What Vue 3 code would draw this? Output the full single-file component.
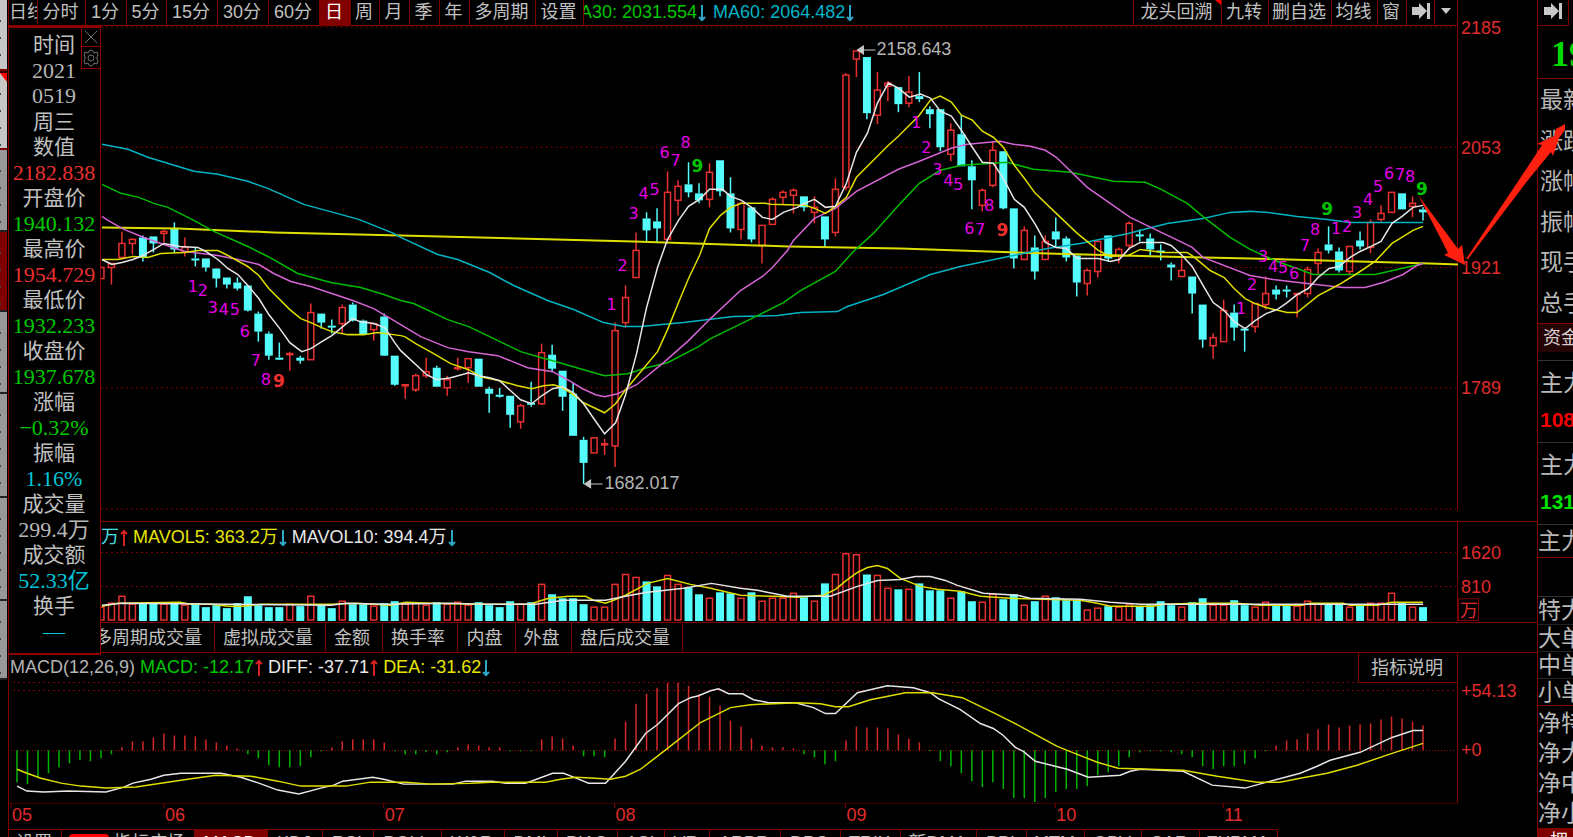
<script setup>
const STEP = 10.5
const xAt = (i) => 16 + STEP * i

const periods = [
  { t: '日线', w: 29, clip: true }, { t: '分时', w: 48 }, { t: '1分', w: 41 }, { t: '5分', w: 40 },
  { t: '15分', w: 51 }, { t: '30分', w: 51 }, { t: '60分', w: 51 }, { t: '日', w: 31, on: true },
  { t: '周', w: 29 }, { t: '月', w: 30 }, { t: '季', w: 30 }, { t: '年', w: 30 },
  { t: '多周期', w: 66 }, { t: '设置', w: 48 }
]
const tools = [
  { t: '龙头回溯', w: 88, flag: true }, { t: '九转', w: 47 }, { t: '删自选', w: 63 },
  { t: '均线', w: 46 }, { t: '窗', w: 29 }
]
const info = [
  ['时间', 'n'], ['2021', 'g'], ['0519', 'g'], ['周三', 'n'],
  ['数值', 'n'], ['2182.838', 'up'], ['开盘价', 'n'], ['1940.132', 'down'],
  ['最高价', 'n'], ['1954.729', 'up'], ['最低价', 'n'], ['1932.233', 'down'],
  ['收盘价', 'n'], ['1937.678', 'down'], ['涨幅', 'n'], ['−0.32%', 'down'],
  ['振幅', 'n'], ['1.16%', 'cy'], ['成交量', 'n'], ['299.4万', 'g'],
  ['成交额', 'n'], ['52.33亿', 'cy'], ['换手', 'n'], ['—', 'cy']
]
const volTabs = [
  { t: '多周期成交量', w: 206, end: true }, { t: '虚拟成交量', w: 111 }, { t: '金额', w: 57 },
  { t: '换手率', w: 75 }, { t: '内盘', w: 58 }, { t: '外盘', w: 56 }, { t: '盘后成交量', w: 111 }
]
const indicators = [
  ['设置', 53], ['指标广场', 133, 'NEW'], ['MACD', 73], ['KDJ', 55], ['RSI', 51], ['BOLL', 68], ['W&R', 63],
  ['DMI', 53], ['BIAS', 60], ['ASI', 47], ['VR', 45], ['ARBR', 71], ['DPO', 60], ['TRIX', 60],
  ['新DMA', 76], ['BBI', 50], ['MTM', 58], ['OBV', 57], ['SAR', 58], ['EXPMA', 78]
]

// [kind, high, body top, body bottom, low] starting at bar 8
const raw = `r 267 267 278 278|r 263 263 267 284|r 231 243 257 257|r 238 239 243 254|c 235 237 256 261|c 236 236 242 252
r 229 231 233 242|c 222 228 248 252|r 237 247 251 256|c 247 258 259 266|c 258 258 266 271|c 268 268 277 287|c 277 277 283 288
c 277 282 287 290|c 285 285 309 311|c 311 313 330 341|c 331 333 354 359|c 342 357 358 359|r 351 353 354 370|c 355 357 359 363
r 303 312 359 359|c 313 313 321 328|c 319 325 326 333|r 304 307 323 333|c 302 304 319 321|c 319 320 333 334|r 323 323 329 340
c 313 316 354 355|c 355 355 383 385|r 384 384 384 398|r 373 375 389 391|r 357 371 375 377|c 365 367 385 385|r 375 379 387 395
r 357 367 367 370|r 358 358 367 382|c 358 358 385 385|c 386 388 392 412|c 387 394 395 397|c 395 395 413 427|r 403 405 421 428
c 381 402 403 406|r 343 352 403 404|c 344 354 367 371|c 370 370 395 410|c 382 393 434 434|c 436 439 461 483|r 437 437 452 452
r 438 443 443 454|r 322 330 445 466|r 285 297 322 327|r 232 250 277 277|c 212 218 229 242|c 208 221 227 242|r 171 192 239 239
r 180 186 200 215|c 162 184 191 197|c 183 193 199 203|r 163 172 199 207|c 160 160 190 196|c 177 193 227 232|r 202 203 229 239
c 207 207 238 242|r 225 225 245 263|r 197 199 224 224|r 190 192 197 204|r 188 190 195 213|c 196 196 206 211|r 196 207 212 223
c 216 216 238 246|r 178 189 232 236|r 73 75 187 190|r 51 51 59 77|c 57 57 112 119|r 72 90 115 124|r 81 83 86 101
c 87 87 103 112|r 76 92 103 107|c 72 96 98 102|c 106 109 113 128|c 109 109 146 151|r 123 130 154 161|c 115 134 165 165
c 160 166 179 209|r 188 190 205 211|r 141 150 185 187|c 151 151 207 209|c 208 208 257 268|r 226 230 259 259|c 235 247 270 279
r 235 241 259 259|c 217 231 238 247|c 236 238 256 261|c 255 255 281 296|r 268 270 283 295|r 239 241 271 277|c 235 235 257 261
r 247 249 255 263|r 221 223 245 249|c 229 234 235 241|c 233 238 248 255|c 244 250 251 260|c 262 264 266 280|r 255 270 276 276
c 276 276 292 313|c 304 304 338 347|r 333 337 345 358|r 299 310 341 341|c 304 312 326 340|c 327 328 329 351|r 303 303 326 332
r 276 293 304 309|c 285 289 293 299|c 285 289 290 297|r 293 293 293 317|r 266 269 293 297|r 248 252 263 275|c 226 244 249 253
c 247 251 269 272|r 246 246 271 275|c 231 240 245 249|r 219 222 247 253|r 205 213 219 221|r 192 192 212 212|c 193 193 208 209
r 196 203 206 217|c 207 209 211 220`
const candles = raw.split(/[|\n]/).map((s, n) => {
  const [k, ...v] = s.trim().split(' ')
  const [h, t, b, l] = v.map(Number)
  return { k, h, t, b, l, x: xAt(n + 8) }
})

const volTops = [606, 602, 595, 603, 603, 603, 603, 603, 604, 603, 607, 605, 608, 603, 596, 605, 607, 607, 603, 606, 595, 605, 608, 600,
  604, 604, 605, 603, 601, 603, 602, 604, 602, 603, 601, 604, 602, 605, 607, 601, 603, 602, 583, 594, 598, 598, 604, 606, 606, 583,
  573, 576, 581, 586, 574, 583, 587, 594, 597, 592, 593, 597, 592, 600, 597, 597, 592, 597, 600, 583, 573, 552, 553, 574, 574, 587,
  589, 588, 583, 590, 590, 597, 591, 601, 601, 593, 599, 594, 604, 601, 595, 597, 600, 600, 609, 607, 606, 606, 603, 606, 605, 601,
  605, 606, 602, 598, 604, 604, 600, 605, 606, 601, 605, 605, 605, 600, 603, 603, 604, 606, 605, 602, 602, 592, 603, 606, 607]
const volumes = candles.map((c, n) => ({ k: c.k, x: c.x, t: volTops[n] }))

const hist = [782, 784, 777, 773, 767, 763, 760, 761, 758, 754, 747, 741, 741, 737, 733, 735, 735, 736, 739, 742, 745, 748, 754, 758,
  765, 767, 767, 766, 757, 751, 747, 741, 739, 739, 739, 742, 751, 754, 754, 752, 754, 752, 747, 744, 745, 747, 747, 751, 751, 751,
  739, 736, 738, 745, 756, 756, 757, 738, 721, 703, 693, 687, 682, 682, 685, 693, 696, 705, 720, 726, 738, 745, 747, 747, 748, 754,
  757, 764, 761, 740, 726, 727, 727, 728, 734, 738, 742, 751, 761, 766, 773, 781, 787, 782, 789, 798, 798, 802, 798, 792, 789, 789,
  786, 775, 772, 766, 757, 752, 751, 751, 752, 754, 757, 766, 769, 766, 766, 764, 758, 751, 745, 740, 739, 733, 729, 724, 727, 725,
  724, 723, 719, 716, 718, 721, 725]

const priceLines = [
  ['long', '101,227 177,228 273,232 400,235 633,241 788,246 900,248 1047,253 1160,256 1250,258 1430,263 1458,264'],
  ['ma60', '101,144 127,149 147,157 170,164 193,171 217,174 247,181 267,188 303,204 358,219 393,233 400,237 437,254 457,259 489,272 513,285 547,300 573,309 603,322 623,326 640,326 683,322 733,316 777,315 800,312 837,311 847,306 883,294 930,274 960,266 1013,255 1047,248 1080,243 1128,233 1167,223 1203,218 1230,212 1250,211 1268,212 1297,216 1327,219 1350,222 1423,222'],
  ['ma30', '101,184 120,193 138,197 153,203 167,207 193,220 213,231 247,246 267,256 297,273 330,282 360,287 383,294 400,300 413,303 447,319 468,326 489,336 520,351 541,357 552,360 590,371 604,375 627,373 646,367 667,362 698,346 710,338 743,322 783,302 800,290 835,271 853,251 873,233 900,203 919,183 940,170 961,165 1007,162 1033,169 1070,172 1113,181 1145,182 1161,189 1187,203 1205,218 1230,237 1250,249 1277,261 1297,268 1313,274 1375,274 1397,269 1423,263'],
  ['ma20', '101,216 107,220 123,229 143,237 163,244 184,251 217,255 237,259 258,264 273,273 290,281 310,286 331,293 352,300 373,308 400,324 420,336 447,347 468,351 497,355 527,367 552,371 567,379 582,388 595,394 604,396 617,393 636,384 663,362 688,340 710,318 740,290 762,276 772,267 787,250 793,240 814,218 835,208 856,191 898,169 919,161 951,148 967,144 1000,141 1013,144 1030,146 1045,150 1056,157 1087,187 1130,217 1161,232 1182,242 1192,247 1203,257 1250,275 1273,279 1307,283 1343,287 1365,287 1383,282 1403,274 1417,265 1423,263'],
  ['ma10', '101,259 117,259 132,256 147,257 160,253 184,252 197,250 217,250 227,255 247,266 258,275 268,288 289,309 300,318 310,322 321,327 331,331 347,334 363,334 377,332 400,335 404,336 415,343 433,353 450,363 468,369 480,376 499,380 517,385 531,388 543,385 553,384 562,387 573,394 583,402 604,412 615,403 625,389 636,376 646,364 657,351 667,329 678,302 688,278 699,255 709,228 720,215 730,207 741,203 765,203 770,204 805,205 814,208 825,213 835,206 846,197 856,177 888,145 898,136 919,115 930,100 940,96 951,102 961,115 972,120 982,131 993,137 1003,147 1014,165 1024,178 1035,193 1056,213 1077,233 1098,250 1110,256 1128,255 1140,249 1163,252 1187,252 1193,256 1210,270 1224,277 1234,288 1245,298 1255,303 1266,307 1287,312 1297,312 1318,295 1339,284 1357,273 1375,261 1392,243 1413,230 1423,226'],
  ['ma5', '101,259 111,264 121,262 132,259 142,255 153,249 163,243 179,246 197,247 205,251 217,259 227,268 237,274 247,285 258,298 268,314 279,328 289,342 301,351 310,348 321,341 331,335 342,326 352,318 359,321 373,323 384,327 394,342 400,350 426,374 436,379 450,377 468,372 478,375 489,377 499,380 510,390 520,399 531,403 541,395 552,388 562,386 573,392 583,403 594,419 604,433 615,422 625,394 636,353 646,307 657,267 663,250 667,239 678,220 688,206 699,199 709,189 722,189 730,196 741,200 751,207 762,217 772,219 783,212 797,207 804,203 814,199 825,207 835,206 846,183 856,152 867,133 877,103 888,83 898,88 909,97 920,94 930,98 940,111 951,116 961,130 972,147 982,162 993,163 1003,178 1014,199 1024,207 1035,224 1045,242 1056,247 1066,248 1077,258 1098,258 1110,261 1119,259 1129,248 1140,242 1163,242 1171,245 1182,255 1192,266 1203,285 1213,302 1224,310 1234,321 1245,328 1255,320 1266,313 1277,309 1287,302 1297,294 1308,288 1318,277 1329,268 1339,266 1350,257 1360,251 1371,246 1381,241 1392,223 1402,216 1413,207 1423,205']
]
const volLines = [
  ['ma10', '101,606 117,603 179,602 190,604 210,604 228,606 242,606 260,604 330,604 355,603 390,605 405,602 430,603 480,604 530,604 535,602 548,598 568,596 585,596 593,600 605,603 613,600 625,595 647,583 667,578 690,584 710,588 740,595 773,596 797,597 823,595 835,589 846,580 857,572 867,567 877,565 887,568 900,578 920,586 937,589 960,591 980,596 1010,598 1080,600 1097,603 1110,606 1153,606 1163,604 1198,603 1237,603 1260,605 1302,605 1310,603 1343,603 1350,605 1377,605 1392,602 1423,602'],
  ['ma5', '101,605 121,603 230,604 330,605 345,603 385,604 450,603 480,604 535,604 563,600 605,600 630,595 647,592 683,588 711,583 740,588 757,590 787,596 830,596 857,586 877,580 900,579 915,576 930,576 945,580 957,585 983,593 1017,595 1030,598 1080,599 1110,602 1140,604 1423,604']
]
const macdLines = [
  ['ma5', '16,786 26,791 43,792 67,791 105,792 123,787 132,783 150,779 163,775 180,773 220,773 240,777 258,783 277,790 298,794 320,788 333,785 342,781 372,777 383,779 403,784 452,784 465,781 492,781 505,783 525,783 552,773 563,773 573,777 588,783 605,783 625,761 645,733 657,724 678,703 690,697 698,695 710,690 718,688 728,693 742,693 753,699 768,702 795,702 813,707 825,713 835,713 857,692 887,685 913,687 930,692 938,698 960,709 980,723 993,728 1003,735 1015,747 1023,751 1035,761 1067,769 1088,777 1120,775 1130,771 1140,769 1183,771 1212,785 1245,788 1263,783 1300,773 1317,766 1330,760 1360,752 1392,737 1413,730 1423,730'],
  ['ma10', '16,769 26,773 40,778 60,783 80,786 105,788 135,787 180,780 215,775 250,776 277,781 300,786 345,786 370,782 405,782 430,784 470,783 490,782 545,782 560,779 575,777 595,778 610,779 625,776 640,769 667,748 700,722 730,707 750,704 797,702 820,703 835,706 848,706 870,699 905,692 932,692 962,697 993,712 1013,722 1033,733 1057,746 1077,754 1097,762 1118,768 1183,770 1217,776 1257,782 1280,782 1300,778 1327,773 1357,765 1392,753 1423,743']
]

const marks = [
  [1, 192, 285], [2, 202, 289], [3, 212, 306], [4, 223, 308], [5, 234, 308], [6, 244, 330], [7, 255, 359], [8, 265, 378], [9, 278, 380, 'hot'],
  [1, 611, 303], [2, 622, 265], [3, 633, 213], [4, 643, 193], [5, 654, 189], [6, 664, 152], [7, 675, 160], [8, 685, 142], [9, 697, 166, 'cool'],
  [1, 916, 122], [2, 926, 147], [3, 937, 169], [4, 948, 180], [5, 958, 184], [6, 969, 228], [7, 980, 229], [8, 989, 205], [9, 1002, 230, 'hot'],
  [1, 1241, 307], [2, 1252, 283], [3, 1263, 256], [4, 1273, 266], [5, 1283, 267], [6, 1294, 273], [7, 1305, 245], [8, 1315, 229], [9, 1327, 209, 'cool'],
  [1, 1336, 228], [2, 1347, 226], [3, 1357, 212], [4, 1368, 199], [5, 1378, 186], [6, 1389, 173], [7, 1400, 174], [8, 1410, 176], [9, 1422, 189, 'cool']
]
const months = [['05', 10], ['06', 163], ['07', 383], ['08', 614], ['09', 845], ['10', 1055], ['11', 1223]]
const quotes = ['最新', '涨跌', '涨幅', '振幅', '现手', '总手']
const orders = ['特大', '大单', '中单', '小单']
const nets = ['净特', '净大', '净中', '净小']
const strip = [
  ['light', 71], ['light flag', 79], ['grey', 82], ['red', 80], ['grey', 82], ['grey', 104], ['grey', 103], ['grey', 79]
]
</script>

<template>
  <div class="app">
    <aside class="strip">
      <div v-for="(s, n) in strip" :key="n" :class="s[0]" :style="{ height: s[1] + 'px' }"></div>
    </aside>

    <main class="main">
      <header class="toolbar">
        <nav class="cells">
          <button v-for="p in periods" :key="p.t" :class="{ on: p.on, clip: p.clip }" :style="{ width: p.w + 'px' }">{{ p.t }}</button>
        </nav>
        <div class="legend top">
          <span class="green">MA30: 2031.554</span>
          <svg class="arr" viewBox="0 0 10 18"><path class="dn" d="M5 1V16M2 13L5 16L8 13" /></svg>
          <span class="cyan">MA60: 2064.482</span>
          <svg class="arr" viewBox="0 0 10 18"><path class="dn" d="M5 1V16M2 13L5 16L8 13" /></svg>
        </div>
        <nav class="cells right">
          <button v-for="p in tools" :key="p.t" :class="{ flag: p.flag }" :style="{ width: p.w + 'px' }">{{ p.t }}</button>
          <button class="ico" aria-label="收起"><svg width="20" height="18" viewBox="0 0 20 18"><path d="M1 5H8V1L16 9L8 17V13H1ZM16 1H19V17H16Z" /></svg></button>
          <button class="ico more" aria-label="更多"><svg width="12" height="6" viewBox="0 0 12 6"><path d="M1 0H11L6 6Z" /></svg></button>
        </nav>
      </header>

      <section class="pane price">
        <svg class="plot" viewBox="8 26 1450 494" preserveAspectRatio="none">
          <line v-for="y in [27, 147, 267, 387, 508]" :key="y" class="dots" x1="10" x2="1456" :y1="y" :y2="y" />
          <line class="frame" x1="1457.5" x2="1457.5" y1="26" y2="509" />
          <g v-for="c in candles" :key="c.x" :class="c.k">
            <line v-if="c.h < c.t" :x1="c.x" :x2="c.x" :y1="c.h" :y2="c.t" />
            <line v-if="c.l > c.b" :x1="c.x" :x2="c.x" :y1="c.b" :y2="c.l" />
            <rect v-if="c.k === 'c'" :x="c.x - 4" :y="c.t" width="8" :height="c.b - c.t + 1" />
            <rect v-else :x="c.x - 3" :y="c.t" width="6" :height="Math.max(c.b - c.t, 1)" />
          </g>
          <polyline v-for="l in priceLines" :key="l[0]" :class="['ln', l[0]]" :points="l[1]" />
          <text v-for="(m, n) in marks" :key="n" :class="['mark', m[3]]" :x="m[1]" :y="m[2] + 6">{{ m[0] }}</text>
          <path class="tag" d="M857 50H875M863 46V54L857 50Z" />
          <text class="tagt" x="876" y="55">2158.643</text>
          <path class="tag" d="M584 483H602M590 479V487L584 483Z" />
          <text class="tagt" x="604" y="488">1682.017</text>
        </svg>
        <svg class="axis" viewBox="1458 26 79 494" preserveAspectRatio="none">
          <text x="1461" y="34">2185</text><text x="1461" y="154">2053</text>
          <text x="1461" y="274">1921</text><text x="1461" y="393">1789</text>
        </svg>
      </section>

      <section class="pane volume">
        <svg class="plot" viewBox="8 521 1450 101" preserveAspectRatio="none">
          <line v-for="y in [552, 586]" :key="y" class="dots" x1="10" x2="1456" :y1="y" :y2="y" />
          <line class="frame" x1="1457.5" x2="1457.5" y1="521" y2="622" />
          <g v-for="v in volumes" :key="v.x" :class="v.k">
            <rect v-if="v.k === 'c'" :x="v.x - 4" :y="v.t" width="8" :height="621 - v.t" />
            <rect v-else :x="v.x - 3" :y="v.t + 1" width="6" :height="619 - v.t" />
          </g>
          <polyline v-for="l in volLines" :key="l[0]" :class="['ln', l[0]]" :points="l[1]" />
        </svg>
        <svg class="axis" viewBox="1458 521 79 101" preserveAspectRatio="none">
          <text x="1461" y="558">1620</text><text x="1461" y="593">810</text>
          <rect class="box" x="1458.5" y="598.5" width="20" height="22" />
          <text x="1460" y="617">万</text>
        </svg>
        <div class="legend vol">
          <span class="aqua">万</span>
          <svg class="arr" viewBox="0 0 10 18"><path class="up" d="M5 17V2M2 5L5 2L8 5" /></svg>
          <span class="yellow">MAVOL5: 363.2万</span>
          <svg class="arr" viewBox="0 0 10 18"><path class="dn" d="M5 1V16M2 13L5 16L8 13" /></svg>
          <span class="white">MAVOL10: 394.4万</span>
          <svg class="arr" viewBox="0 0 10 18"><path class="dn" d="M5 1V16M2 13L5 16L8 13" /></svg>
        </div>
      </section>

      <nav class="cells voltabs">
        <button v-for="t in volTabs" :key="t.t" :class="{ end: t.end }" :style="{ width: t.w + 'px' }">{{ t.t }}</button>
      </nav>

      <section class="pane macd">
        <svg class="plot" viewBox="8 652 1450 151" preserveAspectRatio="none">
          <line v-for="y in [682, 690]" :key="y" class="dots" x1="12" x2="1456" :y1="y" :y2="y" />
          <line class="dots dense" x1="10" x2="1456" y1="750" y2="750" />
          <line class="frame" x1="1457.5" x2="1457.5" y1="652" y2="803" />
          <line v-for="(h, n) in hist" :key="n" :class="h > 750 ? 'neg' : 'pos'" :x1="xAt(n)" :x2="xAt(n)" y1="750" :y2="h" />
          <polyline v-for="l in macdLines" :key="l[0]" :class="['ln', l[0]]" :points="l[1]" />
        </svg>
        <svg class="axis" viewBox="1458 652 79 151" preserveAspectRatio="none">
          <text x="1461" y="696">+54.13</text><text x="1461" y="756">+0</text>
        </svg>
        <div class="legend mac">
          <span class="grey">MACD(12,26,9)</span>
          <span class="green lead">MACD: -12.17</span>
          <svg class="arr" viewBox="0 0 10 18"><path class="up" d="M5 17V2M2 5L5 2L8 5" /></svg>
          <span class="white">DIFF: -37.71</span>
          <svg class="arr" viewBox="0 0 10 18"><path class="up" d="M5 17V2M2 5L5 2L8 5" /></svg>
          <span class="yellow">DEA: -31.62</span>
          <svg class="arr" viewBox="0 0 10 18"><path class="dn" d="M5 1V16M2 13L5 16L8 13" /></svg>
        </div>
        <button class="explain">指标说明</button>
      </section>

      <div class="months">
        <svg class="plot" viewBox="8 803 1450 26" preserveAspectRatio="none">
          <line class="frame" x1="8" x2="1458" y1="803" y2="803" />
          <g v-for="m in months" :key="m[0]">
            <line class="frame" :x1="m[1]" :x2="m[1]" y1="803" y2="808" />
            <text class="month" :x="m[1] + 1" y="821">{{ m[0] }}</text>
          </g>
        </svg>
      </div>

      <nav class="cells indicators">
        <button v-for="t in indicators" :key="t[0]" :class="{ on: t[0] === 'MACD' }" :style="{ width: t[1] + 'px' }"><b v-if="t[2]">{{ t[2] }}</b>{{ t[0] }}</button>
      </nav>

      <section class="info">
        <div v-for="(r, n) in info" :key="n" :class="r[1]">{{ r[0] }}</div>
        <div class="corner">
          <button aria-label="关闭"><svg width="14" height="14" viewBox="0 0 14 14"><path d="M1 1L13 13M13 1L1 13" /></svg></button>
          <button aria-label="设置"><svg width="18" height="18" viewBox="0 0 18 18"><path d="M7 2L9 1L11 2L12 4L15 3L16 6L15 8V10L16 12L15 15L12 14L11 16L9 17L7 16L6 14L3 15L2 12L3 10V8L2 6L3 3L6 4Z" /><circle cx="9" cy="9" r="3" /></svg></button>
        </div>
      </section>
    </main>

    <aside class="side">
      <div class="sidebar-top"><button class="ico" aria-label="展开"><svg width="20" height="18" viewBox="0 0 20 18"><path d="M1 5H8V1L16 9L8 17V13H1ZM16 1H19V17H16Z" /></svg></button></div>
      <div class="last">1937.678</div>
      <div class="quotes"><div v-for="q in quotes" :key="q">{{ q }}</div></div>
      <div class="fund">资金</div>
      <div class="flow">
        <div>主力</div><div class="num hot">10850</div>
      </div>
      <div class="flow">
        <div>主力</div><div class="num cool">13120</div>
      </div>
      <div class="force">主力</div>
      <div class="blank"></div>
      <div class="orders"><div v-for="o in orders" :key="o">{{ o }}</div></div>
      <div class="nets"><div v-for="o in nets" :key="o">{{ o }}</div></div>
      <div class="foot">押</div>
    </aside>

    <svg class="draw" viewBox="1410 110 160 160">
      <path d="M1418 195L1442 241L1448 253L1444 255L1465 265L1462 245L1458 249L1450 238Z" />
      <path d="M1466 259L1519 180L1542 145L1537 144L1554 136L1556 129L1565 124V130L1559 138L1553 156L1551 152L1528 180L1468 259Z" />
    </svg>
  </div>
</template>

<style>
body { background: #000; }
</style>

<style scoped>
* { box-sizing: border-box; }
.app {
  position: relative; display: flex; height: 100vh; overflow: hidden; background: #000;
  font-family: "Liberation Sans", "Noto Sans CJK SC", sans-serif; font-size: 18px; color: #c0c0c0;
}
button { font: inherit; color: inherit; background: none; border: 0; padding: 0; margin: 0; white-space: nowrap; }

.strip { width: 8px; flex: none; }
.strip div { width: 7px; border-bottom: 2px solid #222; background: repeating-linear-gradient(180deg, transparent 0 15px, #444 15px 17px) 0 5px / 1px 100% no-repeat, #989898; }
.strip .light { background-color: #c6c6c6; border-bottom-color: #800000; }
.strip .red { background-color: #800000; }
.strip .flag { position: relative; border-top: 2px solid #300; }
.strip .flag::after { content: ""; position: absolute; inset: 0 0 auto 0; height: 9px; background: #f00; clip-path: polygon(0 0, 100% 0, 100% 100%); }

.main { position: relative; flex: 1; min-width: 0; display: flex; flex-direction: column; border-left: 1px solid #800000; }
.toolbar { display: flex; height: 26px; flex: none; border-bottom: 1px solid #800000; margin-right: 79px; }
.cells { display: flex; flex: none; }
.cells button { flex: none; height: 100%; border-right: 1px solid #780000; line-height: 22px; padding-bottom: 2px; padding-right: 2px; overflow: hidden; }
.cells .on { background: #800000; color: #fff; }
.cells .clip { text-align: left; }
.right { margin-left: auto; border-left: 1px solid #780000; }
.right .flag { position: relative; }
.right .flag::after { content: ""; position: absolute; top: 0; right: 0; width: 6px; height: 5px; background: #f00; clip-path: polygon(0 0, 100% 0, 100% 100%); }
.ico { display: flex; align-items: center; justify-content: center; }
.ico svg { fill: #c8c8c8; }
.cells .ico { width: 28px; padding-right: 0; padding-bottom: 3px; }
.cells .more { width: 23px; }

.legend { display: flex; align-items: center; white-space: pre; line-height: 24px; }
.legend .arr { width: 10px; height: 18px; flex: none; margin: 2px 4px 0 0; fill: none; stroke-width: 2; }
.dn { stroke: #2fa8c8; }
.up { stroke: #d42222; }
.top { flex: 1; min-width: 0; overflow: hidden; height: 23px; }
.top span:first-child { margin-left: -19px; }
.top .arr { margin-right: 6px; }
.green { color: #00c800; } .cyan { color: #00b4c8; } .aqua { color: #48e0e8; }
.yellow { color: #e6e600; } .white { color: #e8e8e8; } .legend .grey { color: #b4b4b4; }
.lead { margin-left: 5px; }

.pane { position: relative; display: flex; flex: none; }
.price { flex: 1; min-height: 0; }
.plot { display: block; flex: 1; min-width: 0; height: 100%; }
.axis { display: block; width: 79px; height: 100%; flex: none; overflow: visible; }
.axis text, .month { fill: #e02c2c; font-size: 18px; }
.axis .box { fill: none; stroke: #800000; }
.volume { height: 102px; border-top: 1px solid #800000; border-bottom: 1px solid #800000; }
.macd { height: 151px; border-top: 1px solid #800000; }
.vol { position: absolute; top: 3px; left: 92px; }
.mac { position: absolute; top: 2px; left: 1px; }
.voltabs { height: 29px; }
.voltabs button { line-height: 26px; padding-bottom: 0; padding-right: 4px; }
.voltabs .end { text-align: right; padding-right: 12px; }
.explain { position: absolute; top: 0; right: 79px; width: 100px; height: 30px; border: solid #800000; border-width: 0 1px 1px; background: #000; line-height: 26px; padding-right: 2px; }

.frame { stroke: #800000; stroke-width: 1; }
.dots { stroke: #800000; stroke-width: 1; stroke-dasharray: 2 3; shape-rendering: crispEdges; }
.dense { stroke-dasharray: 1 2; stroke: #a00000; }
.r { stroke: #e83030; stroke-width: 1.5; fill: none; }
.c line { stroke: #54fcfc; stroke-width: 1.5; }
.c rect { fill: #54fcfc; }
.ln { fill: none; stroke-width: 1.5; }
.long, .ma10 { stroke: #dede00; }
.long { stroke-width: 2; }
.ma60 { stroke: #00b4c4; } .ma30 { stroke: #00bc00; } .ma20 { stroke: #d464d4; } .ma5 { stroke: #e6e6e6; }
.pos { stroke: #d42828; stroke-width: 1.5; } .neg { stroke: #00b400; stroke-width: 1.5; }
.mark { fill: #e400e4; font: 16px "DejaVu Sans", sans-serif; text-anchor: middle; }
.mark.hot { fill: #f03030; font-size: 17px; font-weight: bold; }
.mark.cool { fill: #00c400; font-size: 17px; font-weight: bold; }
.tag { stroke: #c8c8c8; stroke-width: 1; fill: #c8c8c8; }
.tagt { fill: #b4b4b4; font-size: 18px; }

.months { display: flex; height: 26px; flex: none; margin-right: 79px; }
.indicators { height: 8px; overflow: hidden; border-top: 1px solid #780000; align-self: flex-start; }
.indicators button { height: 27px; line-height: 24px; }
.indicators b { display: inline-block; background: #f00; color: #fff; font-size: 14px; line-height: 16px; height: 18px; padding: 0 4px; border-radius: 4px 4px 0 0; margin-right: 4px; vertical-align: top; margin-top: 3px; }

.info {
  position: absolute; left: -1px; top: 26px; width: 93px; height: 629px; padding: 4px 1px 9px 0; background: #000; border: 2px solid #900000; border-left-width: 1px; border-right-width: 1px;
  display: grid; grid-template-rows: repeat(24, 1fr); justify-items: center; font-size: 21px; line-height: 25px; white-space: nowrap;
}
.info .up, .info .down, .info .cy, .info .g { font-family: "Liberation Serif", "Noto Sans CJK SC", serif; font-size: 22px; }
.info .up { color: #e83030; } .info .down { color: #00c800; } .info .cy { color: #00c4d8; } .info .g { color: #b8b8b8; }
.corner { position: absolute; top: 0; right: 0; width: 19px; border: solid #900000; border-width: 0 0 1px 1px; }
.corner button { display: flex; width: 18px; height: 18px; align-items: center; justify-content: center; }
.corner button + button { height: 22px; border-top: 1px solid #900000; }
.corner svg { fill: none; stroke: #707070; }

.side { width: 36px; flex: none; overflow: hidden; border-left: 1px solid #800000; font-size: 23px; white-space: nowrap; color: #b8b8b8; }
.side > div { overflow: hidden; }
.sidebar-top { height: 26px; }
.sidebar-top .ico { width: 31px; height: 26px; border: solid #780000; border-width: 0 1px 1px 0; padding-bottom: 3px; }
.last { height: 53px; padding-left: 13px; border-bottom: 1px solid #800000; font: bold 36px/57px "Liberation Serif", serif; color: #00dc00; }
.quotes { height: 245px; padding-top: 1px; border-bottom: 1px solid #800000; display: grid; grid-auto-rows: 1fr; padding-left: 2px; line-height: 40px; }
.fund { height: 28px; padding-left: 5px; font-size: 18px; line-height: 29px; background: #240404; color: #d8d0d0; }
.flow { height: 82px; padding-left: 2px; border-top: 1px solid #333; line-height: 44px; }
.fund + .flow { margin-top: 8px; }
.num { font-size: 21px; font-weight: bold; line-height: 30px; }
.hot { color: #f00000; } .cool { color: #00e000; }
.force { height: 34px; border-top: 1px solid #333; border-bottom: 1px solid #800000; line-height: 32px; }
.blank { height: 39px; border-bottom: 1px solid #333; }
.orders { height: 109px; display: grid; grid-auto-rows: 1fr; border-bottom: 1px solid #800000; line-height: 26px; }
.orders div + div { border-top: 1px solid #222; }
.nets { height: 122px; display: grid; grid-auto-rows: 30px; line-height: 30px; padding-top: 2px; }
.foot { height: 28px; padding-left: 12px; background: #800000; color: #eee; font-size: 18px; line-height: 26px; }

.draw { position: absolute; top: 110px; right: 3px; width: 160px; height: 160px; fill: #ff2010; pointer-events: none; }
</style>
